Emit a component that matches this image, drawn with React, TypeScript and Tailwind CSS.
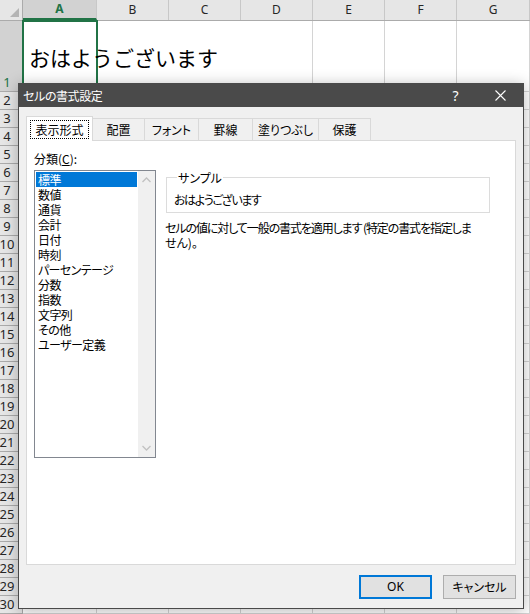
import React from 'react'

const cols = [
  { n: 'A', w: 'w-[74px]' },
  { n: 'B', w: 'w-[72px]' },
  { n: 'C', w: 'w-[72px]' },
  { n: 'D', w: 'w-[72px]' },
  { n: 'E', w: 'w-[72px]' },
  { n: 'F', w: 'w-[72px]' },
  { n: 'G', w: 'w-[73px]' },
]

const rows = Array.from({ length: 30 }, (_, i) => i + 1)

const categories = [
  '標準',
  '数値',
  '通貨',
  '会計',
  '日付',
  '時刻',
  'パーセンテージ',
  '分数',
  '指数',
  '文字列',
  'その他',
  'ユーザー定義',
]

const tabs = [
  { label: '配置', w: 'w-[52px]' },
  { label: 'フォント', w: 'w-[54px]' },
  { label: '罫線', w: 'w-[54px]' },
  { label: '塗りつぶし', w: 'w-[66px]' },
  { label: '保護', w: 'w-[52px]' },
]

function Chevron({ up }: { up?: boolean }) {
  return (
    <svg width="9" height="6" viewBox="0 0 9 6">
      <path
        d={up ? 'M0.5 5 L4.5 1 L8.5 5' : 'M0.5 1 L4.5 5 L8.5 1'}
        fill="none"
        stroke="#c2c2c2"
        strokeWidth="1.3"
      />
    </svg>
  )
}

function Sheet() {
  return (
    <div className="font-['Noto_Sans',sans-serif]">
      {/* column headers */}
      <div className="flex h-[21px] border-b border-[#ababab] bg-[#e6e6e6]">
        <div className="relative w-[23px] border-r border-[#ababab]">
          <svg className="absolute right-[3px] bottom-[3px]" width="9" height="9" viewBox="0 0 9 9">
            <path d="M9 0 L9 9 L0 9 Z" fill="#b4b4b4" />
          </svg>
        </div>
        {cols.map((c) => (
          <div
            key={c.n}
            className={`${c.w} flex items-center justify-center border-r border-[#c8c8c8] text-[12px] ${
              c.n === 'A'
                ? 'bg-[#d2d2d2] text-[#217346] font-bold border-b-2 border-b-[#217346]'
                : 'text-[#262626]'
            }`}
          >
            {c.n}
          </div>
        ))}
      </div>

      {rows.map((r) => (
        <div
          key={r}
          className={`flex border-b border-[#d4d4d4] ${r === 1 ? 'h-[71px]' : 'h-[18px]'}`}
        >
          <div
            className={`w-[23px] flex items-end pr-[8px] justify-center border-r border-b border-[#ababab] -mb-px text-[13px] leading-[18px] ${
              r === 1 ? 'bg-[#d2d2d2] text-[#217346]' : 'bg-[#e6e6e6] text-[#262626]'
            }`}
          >
            {r}
          </div>
          {cols.map((c) => {
            const overflow = r === 1 && (c.n === 'A' || c.n === 'B' || c.n === 'C')
            return (
              <div
                key={c.n}
                className={`${c.w} relative ${overflow ? '' : 'border-r border-[#d4d4d4]'}`}
              >
                {r === 1 && c.n === 'A' && (
                  <>
                    <div className="absolute inset-x-[-1px] top-[-1px] bottom-[-1px] border-2 border-[#217346]" />
                    <div className="absolute left-[6px] top-0 bottom-0 pt-[4px] flex items-center whitespace-nowrap z-10 font-['Noto_Sans_CJK_JP',sans-serif] text-[21px] text-black">
                      おはようございます
                    </div>
                  </>
                )}
              </div>
            )
          })}
        </div>
      ))}
    </div>
  )
}

function Dialog() {
  return (
    <div className="absolute left-[18px] top-[83px] w-[506px] h-[526px] flex flex-col border border-[#4a4a4a] bg-[#f0f0f0] shadow-[0_2px_14px_rgba(0,0,0,0.28)] font-['Noto_Sans_CJK_JP',sans-serif] [font-feature-settings:'palt'] text-[12px] text-black">
      {/* title bar */}
      <div className="h-[23px] flex items-center bg-[#4a4a4a] text-white">
        <div className="flex-1 pl-[4px] leading-[23px] tracking-[-0.4px]">セルの書式設定</div>
        <div className="w-[45px] h-full flex items-center justify-center font-['Noto_Sans',sans-serif] text-[14px]">?</div>
        <div className="w-[45px] h-full flex items-center justify-center">
          <svg width="11" height="11" viewBox="0 0 11 11">
            <path d="M0.5 0.5 L10.5 10.5 M10.5 0.5 L0.5 10.5" stroke="#ffffff" strokeWidth="1.1" />
          </svg>
        </div>
      </div>

      <div className="flex-1 flex flex-col px-[7px] pt-[9px]">
        {/* tabs */}
        <div className="relative z-10 flex items-end h-[25px] -mb-px">
          <div className="w-[67px] h-[25px] flex items-center justify-center bg-white border border-b-0 border-[#d9d9d9]">
            <span className="border border-dotted border-black px-[4px] leading-[17px]">表示形式</span>
          </div>
          {tabs.map((t) => (
            <div
              key={t.label}
              className={`${t.w} h-[23px] flex items-center justify-center border-t border-r border-b border-[#d9d9d9] bg-[#f0f0f0] leading-[20px]`}
            >
              {t.label}
            </div>
          ))}
        </div>

        {/* panel */}
        <div className="w-[490px] h-[425px] border border-[#d9d9d9] bg-white pl-[7px] pt-[10px]">
          <div className="leading-[15px]">
            分類(<span className="underline">C</span>):
          </div>
          <div className="mt-[4px] flex items-start">
            <div className="w-[122px] h-[288px] flex border border-[#828790] bg-white">
              <div className="flex-1 p-[1px]">
                {categories.map((c, i) => (
                  <div
                    key={c}
                    className={`h-[15px] leading-[15px] pl-[2px] whitespace-nowrap tracking-[-0.6px] ${
                      i === 0 ? 'bg-[#0078d7] text-white' : ''
                    }`}
                  >
                    {c}
                  </div>
                ))}
              </div>
              <div className="w-[17px] bg-[#f0f0f0] flex flex-col items-center justify-between pt-[6px] pb-[6px]">
                <Chevron up />
                <Chevron />
              </div>
            </div>

            <div className="ml-[9px] w-[330px]">
              <fieldset className="ml-[1px] w-[324px] border border-[#dcdcdc] px-[7px] pt-[7px] pb-[5px]">
                <legend className="ml-[3px] px-[1px] leading-[15px]">サンプル</legend>
                <div className="leading-[15px] tracking-[-1.4px]">おはようございます</div>
              </fieldset>
              <div className="mt-[7px] leading-[15px]">
                <div className="whitespace-nowrap tracking-[-1.1px]">セルの値に対して一般の書式を適用します (特定の書式を指定しま</div>
                <div>せん)。</div>
              </div>
            </div>
          </div>
        </div>

        {/* buttons */}
        <div className="mt-[10px] flex justify-end gap-[11px]">
          <button className="w-[73px] h-[24px] border-2 border-[#0078d7] bg-[#e1e1e1] font-['Noto_Sans',sans-serif] text-[12px] leading-[20px]">
            OK
          </button>
          <button className="w-[73px] h-[24px] border border-[#adadad] bg-[#e1e1e1] leading-[22px]">
            キャンセル
          </button>
        </div>
      </div>
    </div>
  )
}

export default function App() {
  return (
    <div className="relative w-[530px] h-[614px] overflow-hidden bg-white">
      <Sheet />
      <Dialog />
    </div>
  )
}
